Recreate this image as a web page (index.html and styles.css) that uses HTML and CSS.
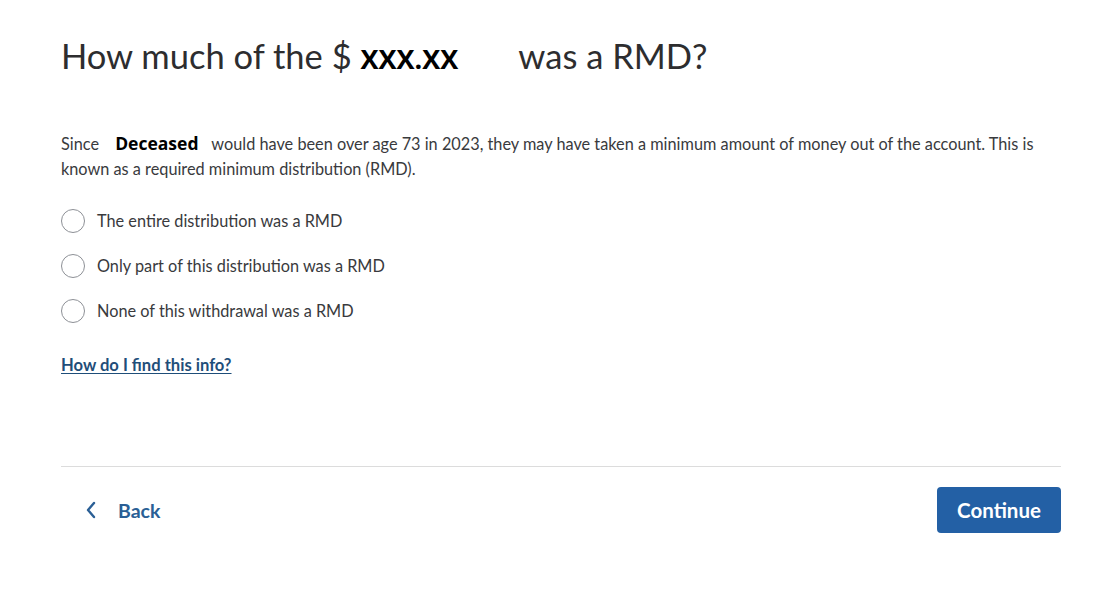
FILE: index.html
```html
<!DOCTYPE html>
<html lang="en">
<head>
<meta charset="utf-8">
<title>RMD</title>
<link rel="stylesheet" href="styles.css">
</head>
<body>
<main class="page">
  <h1 class="title">How much of the $ <span class="amount">XXX.XX</span> was a RMD?</h1>
  <p class="intro"><span>Since</span> <span class="name">Deceased</span> <span>would have been over age 73 in 2023, they may have taken a minimum amount of money out of the account. This is</span> <span>known as a required minimum distribution (RMD).</span></p>
  <div class="options">
    <label class="option"><span class="radio"></span><span>The entire distribution was a RMD</span></label>
    <label class="option"><span class="radio"></span><span>Only part of this distribution was a RMD</span></label>
    <label class="option"><span class="radio"></span><span>None of this withdrawal was a RMD</span></label>
  </div>
  <a class="help" href="#">How do I find this info?</a>
  <div class="footer">
    <a class="back" href="#">
      <svg width="12" height="18" viewBox="0 0 12 18"><path d="M9 2 L3 9 L9 16" fill="none" stroke="#2a5f95" stroke-width="2.4" stroke-linecap="round" stroke-linejoin="round"/></svg>
      <span>Back</span>
    </a>
    <button class="continue">Continue</button>
  </div>
</main>
</body>
</html>
```

FILE: styles.css
```css
* { box-sizing: border-box; }
body {
  margin: 0;
  background: #fff;
  font-family: Lato, "Open Sans", sans-serif;
  color: #393a3d;
}
.page {
  padding: 34px 49px 0 61px;
}
.title {
  margin: 0;
  font-weight: 400;
  font-size: 34.5px;
  line-height: 44px;
  color: #2d2d2f;
}
.amount {
  font-family: "Open Sans", sans-serif;
  font-weight: 700;
  font-size: 27px;
  color: #000;
  margin: 0 52px 0 0;
}
.intro {
  margin: 50px 0 0;
  font-size: 16.3px;
  line-height: 25px;
  color: #393a3d;
}
.name {
  font-family: "Open Sans", sans-serif;
  font-weight: 700;
  font-size: 17.5px;
  line-height: 20px;
  color: #000;
  margin: 0 9px 0 12px;
}
.options {
  margin-top: 28px;
  display: flex;
  flex-direction: column;
  gap: 21px;
}
.option {
  display: flex;
  align-items: center;
  gap: 12px;
  font-size: 16.3px;
  line-height: 24px;
  color: #393a3d;
}
.radio {
  width: 24px;
  height: 24px;
  border: 1px solid #8d9096;
  border-radius: 50%;
  flex: none;
}
.help {
  display: inline-block;
  margin-top: 32px;
  font-size: 16.6px;
  font-weight: 700;
  color: #1f4e79;
  text-decoration: underline;
  text-underline-offset: 2px;
}
.footer {
  margin-top: 91px;
  border-top: 1px solid #dcdcdc;
  padding-top: 20px;
  display: flex;
  justify-content: space-between;
  align-items: center;
}
.back {
  display: flex;
  align-items: center;
  gap: 21px;
  padding-left: 24px;
  color: #2a5f95;
  text-decoration: none;
  font-size: 19.5px;
  font-weight: 700;
}
.continue {
  width: 124px;
  height: 46px;
  border: none;
  border-radius: 4px;
  background: #2360a5;
  color: #fff;
  font-family: Lato, "Open Sans", sans-serif;
  font-size: 20.5px;
  font-weight: 700;
}
```
